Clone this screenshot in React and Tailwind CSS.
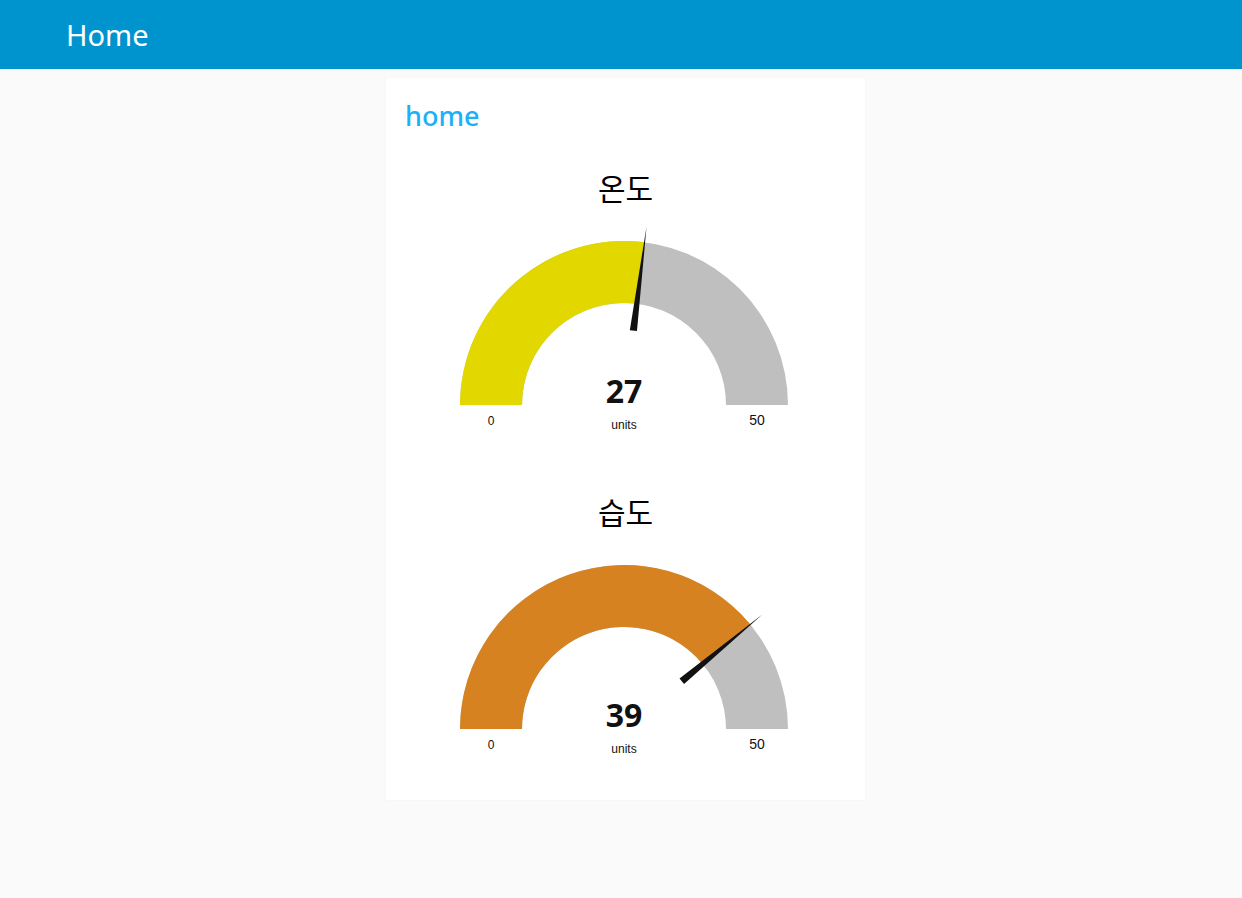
import React from "react";

const CX = 238;
const CY = 197;
const R = 164;
const RI = 102;

function pt(rad, theta) {
  const a = (theta * Math.PI) / 180;
  return [CX - rad * Math.cos(a), CY - rad * Math.sin(a)];
}

function arcPath(f) {
  const th = 180 * f;
  const [ox, oy] = pt(R, th);
  const [ix, iy] = pt(RI, th);
  return `M ${CX - R} ${CY} A ${R} ${R} 0 0 1 ${ox} ${oy} L ${ix} ${iy} A ${RI} ${RI} 0 0 0 ${CX - RI} ${CY} Z`;
}

function needle(f) {
  const th = Math.PI * f;
  const dx = -Math.cos(th);
  const dy = -Math.sin(th);
  const px = -dy;
  const py = dx;
  const tip = [CX + dx * 179.5, CY + dy * 179.5];
  const b = 75;
  const w = 3.6;
  const b1 = [CX + dx * b + px * w, CY + dy * b + py * w];
  const b2 = [CX + dx * b - px * w, CY + dy * b - py * w];
  return `M ${tip[0]} ${tip[1]} L ${b1[0]} ${b1[1]} L ${b2[0]} ${b2[1]} Z`;
}

function Gauge({ title, value, color }) {
  const f = value / 50;
  return (
    <div className="flex flex-col">
      <div
        className="h-[40px] flex items-center justify-center text-[30px] text-black"
        style={{ fontFamily: '"Noto Sans", "Noto Sans CJK KR", sans-serif' }}
      >
        {title}
      </div>
      <svg width="479" height="230" viewBox="0 0 479 230">
        <path d={arcPath(1)} fill="#bfbfbf" />
        <path d={arcPath(f)} fill={color} />
        <path d={needle(f)} fill="#111111" />
        <text
          x={CX}
          y={CY - 2}
          textAnchor="middle"
          fontFamily="'Open Sans', 'Noto Sans', sans-serif"
          fontWeight="700"
          fontSize="32"
          fill="#111111"
        >
          {value}
        </text>
        <text
          x={CX}
          y={CY + 24}
          textAnchor="middle"
          fontFamily="'Liberation Sans', Arial, sans-serif"
          fontSize="12"
          fill="#111111"
        >
          units
        </text>
        <text
          x={CX - 133}
          y={CY + 20}
          textAnchor="middle"
          fontFamily="'Liberation Sans', Arial, sans-serif"
          fontSize="12"
          fill="#111111"
        >
          0
        </text>
        <text
          x={CX + 133}
          y={CY + 20}
          textAnchor="middle"
          fontFamily="'Liberation Sans', Arial, sans-serif"
          fontSize="14"
          fill="#111111"
        >
          50
        </text>
      </svg>
    </div>
  );
}

export default function App() {
  return (
    <div
      className="min-h-[898px] w-full bg-[#fafafa]"
      style={{ fontFamily: '"Noto Sans", "Noto Sans CJK KR", sans-serif' }}
    >
      <header className="h-[69px] bg-[#0094ce] flex items-center pl-[66px]">
        <span className="text-white text-[29px] leading-none">Home</span>
      </header>
      <div className="flex justify-center pt-[9px] pl-[9px]">
        <div className="w-[479px] h-[722px] bg-white flex flex-col shadow-[0_0_2px_rgba(0,0,0,0.04)]">
          <div className="h-[74px] flex items-center pl-[19px]">
            <span className="text-[#1bb1f9] text-[27px] font-medium leading-none">home</span>
          </div>
          <div className="mt-[16px] flex flex-col gap-[54px]">
            <Gauge title="온도" value={27} color="#e2d800" />
            <Gauge title="습도" value={39} color="#d68220" />
          </div>
        </div>
      </div>
    </div>
  );
}
